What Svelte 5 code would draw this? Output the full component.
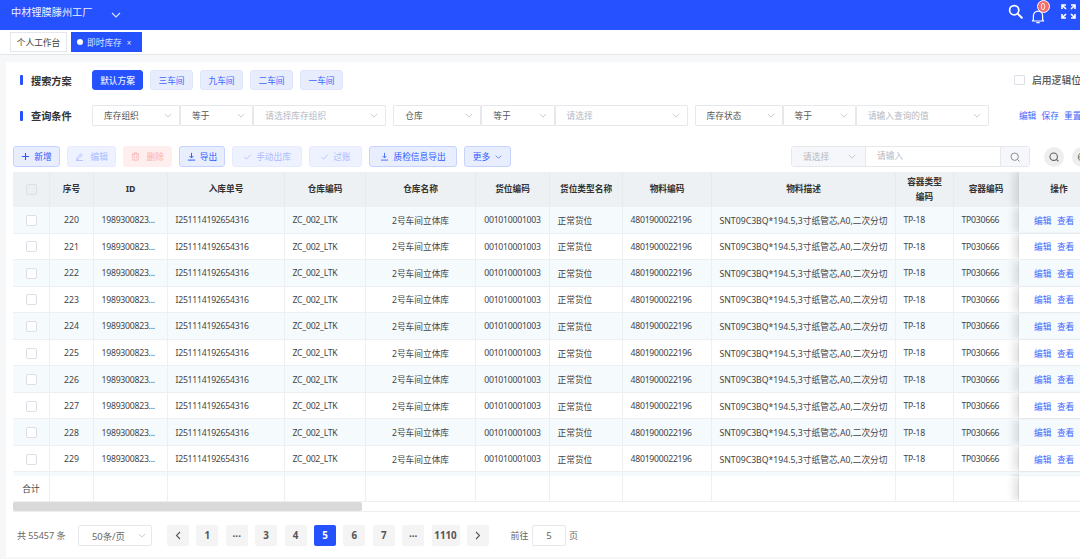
<script>
  const plans = ['三车间', '九车间', '二车间', '一车间'];
  const filters = [
    ['库存组织', '等于', '请选择库存组织'],
    ['仓库', '等于', '请选择'],
    ['库存状态', '等于', '请输入查询的值']
  ];
  const headers = [
    ['', ''], ['序号', ''], ['ID', ''], ['入库单号', ''], ['仓库编码', ''], ['仓库名称', ''],
    ['货位编码', ''], ['货位类型名称', ''], ['物料编码', ''], ['物料描述', ''], ['容器类型', '编码'], ['容器编码', ''], ['操作', '']
  ];
  const rows = Array.from({ length: 11 }, (_, i) => 220 + i);
  const blanks = Array.from({ length: 12 });
  const pages = ['1', '···', '3', '4', '5', '6', '7', '···', '1110'];
</script>

<div class="app">
  <header class="top">
    <span class="org">中材锂膜滕州工厂</span>
    <svg class="org-caret" width="10" height="6" viewBox="0 0 10 6"><path d="M1 1l4 4 4-4" fill="none" stroke="#dfe6ff" stroke-width="1.1"/></svg>
    <div class="top-icons">
      <svg class="i-search" width="15" height="15" viewBox="0 0 15 15"><circle cx="6.2" cy="6.2" r="4.6" fill="none" stroke="#fff" stroke-width="1.7"/><path d="M9.6 9.6l4.2 4.2" stroke="#fff" stroke-width="2" stroke-linecap="round"/></svg>
      <div class="bell">
        <svg width="14" height="15" viewBox="0 0 14 15"><path d="M2.4 10.8V6.7A4.6 4.6 0 0 1 7 2.1a4.6 4.6 0 0 1 4.6 4.6v4.1l1 1.2H1.4z" fill="none" stroke="#fff" stroke-width="1.2" stroke-linejoin="round"/><path d="M5.3 13.6h3.4" stroke="#fff" stroke-width="1.3"/></svg>
        <span class="badge">0</span>
      </div>
      <svg width="15" height="15" viewBox="0 0 15 15" fill="none" stroke="#fff" stroke-width="1.6"><path d="M1 5V1h4M1 1l4 4M10 1h4v4M14 1l-4 4M1 10v4h4M1 14l4-4M14 10v4h-4M14 14l-4-4"/></svg>
    </div>
  </header>

  <nav class="tabs">
    <span class="tab">个人工作台</span>
    <span class="tab active"><i class="dot"></i>即时库存<span class="close">×</span></span>
  </nav>

  <main class="card">
    <section class="search-row">
      <i class="mark"></i><span class="label">搜索方案</span>
      <div class="plans">
        <button class="plan on">默认方案</button>
        {#each plans as p}<button class="plan">{p}</button>{/each}
      </div>
      <label class="logic"><i class="check"></i>启用逻辑位</label>
    </section>

    <section class="query-row">
      <i class="mark"></i><span class="label">查询条件</span>
      <div class="filters">
        {#each filters as f}
          <div class="filter">
            <div class="sel s1"><span>{f[0]}</span><svg class="chev" viewBox="0 0 10 6"><path d="M1 1l4 4 4-4"/></svg></div>
            <div class="sel s2"><span>{f[1]}</span><svg class="chev" viewBox="0 0 10 6"><path d="M1 1l4 4 4-4"/></svg></div>
            <div class="sel s3"><span class="ph">{f[2]}</span><svg class="chev" viewBox="0 0 10 6"><path d="M1 1l4 4 4-4"/></svg></div>
          </div>
        {/each}
      </div>
      <div class="links"><a>编辑</a><a>保存</a><a>重置</a></div>
    </section>

    <section class="toolbar">
      <button class="btn w47"><svg viewBox="0 0 10 10" class="ic"><path d="M5 1v8M1 5h8" stroke="currentColor" stroke-width="1.2"/></svg>新增</button>
      <button class="btn dis w49"><svg viewBox="0 0 10 10" class="ic wide-gap"><path d="M2 7l4.5-5 1.5 1.3L3.5 8.2 1.8 8.4zM1 9.5h8" fill="none" stroke="currentColor" stroke-width=".9"/></svg>编辑</button>
      <button class="btn red w49"><svg viewBox="0 0 10 10" class="ic wide-gap"><path d="M1 2.5h8M3.5 2.5V1h3v1.5M2 2.5V9h6V2.5M4 4.5V7M6 4.5V7" fill="none" stroke="currentColor" stroke-width=".9"/></svg>删除</button>
      <button class="btn w46"><svg viewBox="0 0 10 10" class="ic"><path d="M5 1v5.5M2.8 4.4L5 6.6l2.2-2.2M1 9h8" fill="none" stroke="currentColor" stroke-width="1.1"/></svg>导出</button>
      <button class="btn dis w70"><svg viewBox="0 0 10 10" class="ic"><path d="M1.5 5.5l2.4 2.4 4.8-5" fill="none" stroke="currentColor" stroke-width=".9"/></svg>手动出库</button>
      <button class="btn dis w53"><svg viewBox="0 0 10 10" class="ic"><path d="M1.5 5.5l2.4 2.4 4.8-5" fill="none" stroke="currentColor" stroke-width=".9"/></svg>过账</button>
      <button class="btn w88"><svg viewBox="0 0 10 10" class="ic"><path d="M5 1v5.5M2.8 4.4L5 6.6l2.2-2.2M1 9h8" fill="none" stroke="currentColor" stroke-width=".9"/></svg>质检信息导出</button>
      <button class="btn w47">更多<svg viewBox="0 0 10 6" class="ic-r"><path d="M1 1l4 4 4-4" fill="none" stroke="currentColor" stroke-width="1"/></svg></button>
      <div class="tool-right">
        <div class="combo">
          <div class="c-sel"><span>请选择</span><svg class="chev" viewBox="0 0 10 6"><path d="M1 1l4 4 4-4"/></svg></div>
          <div class="c-in">请输入</div>
          <div class="c-btn"><svg width="10" height="10" viewBox="0 0 10 10" fill="none" stroke="#8b9197" stroke-width="1"><circle cx="4.7" cy="4.7" r="3.7"/><path d="M7.4 7.4l2 2"/></svg></div>
        </div>
        <div class="round"><svg width="10" height="10" viewBox="0 0 10 10" fill="none" stroke="#5c6066" stroke-width="1.1"><circle cx="4.7" cy="4.7" r="3.7"/><path d="M7.4 7.4l2 2"/></svg></div>
        <div class="round"><svg width="10" height="10" viewBox="0 0 10 10" fill="none" stroke="#8a7f6e" stroke-width="1.1"><circle cx="5" cy="5" r="3.7"/><path d="M5 1v8M1 5h8"/></svg></div>
      </div>
    </section>

    <section class="table">
      <div class="grid head">
        {#each headers as h, i}
          <div class="cell" class:fixed={i === 12}>
            {#if i === 0}<i class="box hd"></i>{:else}<span>{h[0]}{#if h[1]}<br />{h[1]}{/if}</span>{/if}
          </div>
        {/each}
      </div>
      <div class="body">
        {#each rows as n, i}
          <div class="grid row" class:stripe={i % 2 === 0}>
            <div class="cell"><i class="box"></i></div>
            <div class="cell">{n}</div>
            <div class="cell l num">1989300823...</div>
            <div class="cell l num">I251114192654316</div>
            <div class="cell l num">ZC_002_LTK</div>
            <div class="cell">2号车间立体库</div>
            <div class="cell num">001010001003</div>
            <div class="cell l">正常货位</div>
            <div class="cell l num">4801900022196</div>
            <div class="cell l">SNT09C3BQ*194.5,3寸纸管芯,A0,二次分切</div>
            <div class="cell l num">TP-18</div>
            <div class="cell l num">TP030666</div>
            <div class="cell fixed ops"><a>编辑</a><a>查看</a><a>删除</a></div>
          </div>
        {/each}
      </div>
      <div class="grid foot">
        <div class="cell">合计</div>
        {#each blanks as _, i}<div class="cell" class:fixed={i === 11}></div>{/each}
      </div>
      <div class="scroll"><i class="thumb"></i></div>
    </section>

    <section class="pager">
      <span class="total">共 55457 条</span>
      <div class="size"><span>50条/页</span><svg class="chev" viewBox="0 0 10 6"><path d="M1 1l4 4 4-4"/></svg></div>
      <div class="pages">
        <span class="pg"><svg width="6" height="9" viewBox="0 0 6 9"><path d="M5 1L1.5 4.5 5 8" fill="none" stroke="#555" stroke-width="1.1"/></svg></span>
        {#each pages as p}
          <span class="pg" class:cur={p === '5'} class:wide={p === '1110'} class:more={p === '···'}>{p}</span>
        {/each}
        <span class="pg"><svg width="6" height="9" viewBox="0 0 6 9"><path d="M1 1l3.5 3.5L1 8" fill="none" stroke="#555" stroke-width="1.1"/></svg></span>
      </div>
      <span class="goto">前往</span>
      <div class="jump">5</div>
      <span class="goto page-word">页</span>
    </section>
  </main>
</div>

<style>
  :global(body) { margin: 0; overflow: hidden; }
  * { box-sizing: border-box; }
  i { display: block; }
  a { color: #3f66ff; }
  button { font: inherit; padding: 0; }
  .app {
    width: 1080px; height: 559px; overflow: hidden; background: #f5f7f8; color: #444;
    font-family: "Noto Sans", "Noto Sans CJK SC", sans-serif; font-size: 8.7px;
  }
  .top { height: 30px; background: #2651fe; display: flex; align-items: center; padding: 0 4px 0 11px; color: #eaf0ff; }
  .org { font-size: 10.2px; line-height: 24px; margin-top: -6px; }
  .org-caret { margin-left: 18px; }
  .top-icons { margin-left: auto; align-self: flex-start; padding-top: 4px; display: flex; align-items: flex-start; }
  .i-search { margin-right: 8px; }
  .bell { position: relative; height: 15px; margin-top: 5px; margin-right: 16.5px; }
  .badge {
    position: absolute; left: 6px; top: -9px; width: 13px; height: 13px; border-radius: 50%;
    background: #f56c6c; border: 1px solid #fff; color: #fff; font-size: 8px; line-height: 11px; text-align: center;
  }
  .tabs { height: 24.5px; background: #fff; border-bottom: 1px solid #e4e7ea; display: flex; gap: 4px; padding: 2px 0 0 10px; }
  .tab { height: 20px; width: 57px; border: 1px solid #e4e7ea; display: flex; align-items: center; justify-content: center; color: #444; font-size: 8.7px; }
  .tab.active { width: 71px; background: #2651fe; border-color: #2651fe; color: #dfe6ff; justify-content: flex-start; padding-left: 5px; }
  .dot { width: 6px; height: 6px; border-radius: 50%; background: #fff; margin-right: 4px; }
  .close { margin-left: 5px; font-size: 8px; }

  .card { margin: 7.5px 0 0 6px; height: 494.5px; background: #fff; padding: 8px 0 0 7px; }
  .search-row, .query-row { display: flex; align-items: center; padding-left: 7px; }
  .search-row { height: 20px; }
  .query-row { height: 21px; margin-top: 15px; }
  .mark { width: 3px; height: 10px; border-radius: 1px; background: #2651fe; flex-shrink: 0; }
  .label { width: 61px; margin-left: 8px; font-size: 10.2px; font-weight: 700; color: #333; flex-shrink: 0; }
  .plans { display: flex; gap: 7px; }
  .plan { width: 43px; height: 20px; border: 1px solid #dfe6fb; border-radius: 3px; background: #e8edfd; color: #3f66ff; }
  .plan.on { width: 51px; background: #2651fe; border-color: #2651fe; color: #e6ecff; font-weight: 500; }
  .logic { width: 65px; display: flex; align-items: center; flex-shrink: 0; margin-left: 671px; white-space: nowrap; font-size: 9.8px; font-weight: 500; color: #555; }
  .check { width: 10.5px; height: 10.5px; border: 1px solid #dcdfe6; border-radius: 1px; margin-right: 7.5px; flex-shrink: 0; }
  .filters { display: flex; gap: 7px; flex-shrink: 0; }
  .filter { display: flex; }
  .sel { height: 21px; border: 1px solid #e6e8eb; display: flex; align-items: center; justify-content: space-between; padding: 0 7px 0 11px; color: #555; border-radius: 1px; }
  .s1 { width: 88px; }
  .s2 { width: 73.3px; }
  .s3 { width: 133px; }
  .ph { color: #b5b9bf; }
  .chev { width: 8px; height: 5px; fill: none; stroke: #bcc0c6; stroke-width: 1; flex-shrink: 0; }
  .links { display: flex; gap: 5.2px; margin-left: 30px; white-space: nowrap; flex-shrink: 0; }
  .toolbar { display: flex; align-items: center; gap: 7px; height: 21px; margin-top: 20px; }
  .btn { height: 21px; border: 1px solid #c6d3ff; border-radius: 3px; background: #e9eeff; color: #2f5aff; display: flex; align-items: center; justify-content: center; white-space: nowrap; flex-shrink: 0; }
  .btn.dis { background: #eef2ff; border-color: #e6ebff; color: #a9bbff; }
  .btn.red { background: #feeeee; border-color: #feeeee; color: #f9aeae; }
  .ic { width: 9px; height: 9px; margin-right: 4px; flex-shrink: 0; }
  .ic.wide-gap { margin-right: 6.5px; }
  .ic-r { width: 7px; height: 4px; margin-left: 5px; }
  .w46 { width: 46px; } .w47 { width: 47px; } .w49 { width: 49px; } .w53 { width: 53px; } .w70 { width: 70px; } .w88 { width: 88px; }
  .tool-right { margin-left: 273px; display: flex; align-items: center; gap: 8px; flex-shrink: 0; }
  .combo { display: flex; height: 21px; width: 239px; border: 1px solid #e6e8eb; border-radius: 3px; margin-right: 6px; }
  .c-sel { width: 74px; background: #f5f7fa; display: flex; align-items: center; justify-content: space-between; padding: 0 9px 0 11px; color: #b5b9bf; border-right: 1px solid #e6e8eb; }
  .c-in { width: 134px; padding-left: 11px; line-height: 19px; color: #b5b9bf; }
  .c-btn { flex: 1; background: #f5f7fa; border-left: 1px solid #e6e8eb; display: flex; align-items: center; justify-content: center; }
  .round { width: 20px; height: 20px; border-radius: 50%; background: #eeeeee; display: flex; align-items: center; justify-content: center; flex-shrink: 0; }

  .table { margin-top: 5px; width: 1086px; }
  .grid { display: grid; grid-template-columns: 37px 44px 74px 117px 81px 110px 74px 73px 89px 184px 58px 65px 80px; }
  .cell { border-right: 1px solid #edf0f3; display: flex; align-items: center; justify-content: center; text-align: center; white-space: nowrap; overflow: hidden; }
  .cell.l { justify-content: flex-start; padding-left: 7.5px; }
  .num { letter-spacing: -.26px; }
  .head { height: 35px; background: #eef1f4; font-weight: 700; color: #333; line-height: 15px; }
  .head .cell { border-right-color: #e8ebee; }
  .body { height: 268.5px; overflow: hidden; }
  .row { height: 26.55px; background: #fff; border-bottom: 1px solid #edf0f3; }
  .row .cell { padding-top: 1px; }
  .row.stripe { background: #f5fafd; }
  .fixed { position: relative; z-index: 1; background: inherit; box-shadow: -5px 0 8px rgba(0, 0, 0, .12); clip-path: inset(0 0 0 -14px); border-right: 0; overflow: visible; }
  .ops { justify-content: flex-start; padding-left: 15px; gap: 5.5px; }
  .box { width: 11px; height: 11px; border: 1px solid #dcdfe6; border-radius: 2px; background: #fff; }
  .box.hd { background: #eceef0; }
  .foot { height: 26px; background: #fff; border-bottom: 1px solid #edf0f3; }
  .foot .fixed { background: #fff; }
  .scroll { height: 10px; background: #fff; border-bottom: 1px solid #edf0f3; }
  .thumb { width: 349px; height: 9px; border-radius: 2px; background: #d9d9d9; }
  .pager { display: flex; align-items: center; height: 21px; margin-top: 13.5px; padding-left: 4px; color: #666; }
  .total { width: 61px; white-space: nowrap; font-size: 9px; }
  .size { width: 74px; height: 21px; border: 1px solid #e6e8eb; border-radius: 2px; display: flex; align-items: center; justify-content: space-between; padding: 0 5px 0 13px; font-size: 9.4px; }
  .pages { display: flex; gap: 7.4px; margin-left: 15px; }
  .pg { width: 22px; height: 21px; border-radius: 2px; background: #f4f4f5; display: flex; align-items: center; justify-content: center; font-weight: 700; color: #555; font-size: 9.8px; }
  .pg.more { font-size: 10px; letter-spacing: 0; }
  .pg.wide { width: 28px; }
  .pg.cur { background: #2651fe; color: #fff; }
  .goto { margin-left: 21.5px; font-size: 9px; white-space: nowrap; }
  .jump { width: 34px; height: 21px; margin-left: 3.5px; border: 1px solid #e6e8eb; border-radius: 2px; display: flex; align-items: center; justify-content: center; font-size: 9.5px; }
  .page-word { margin-left: 3px; }
</style>
